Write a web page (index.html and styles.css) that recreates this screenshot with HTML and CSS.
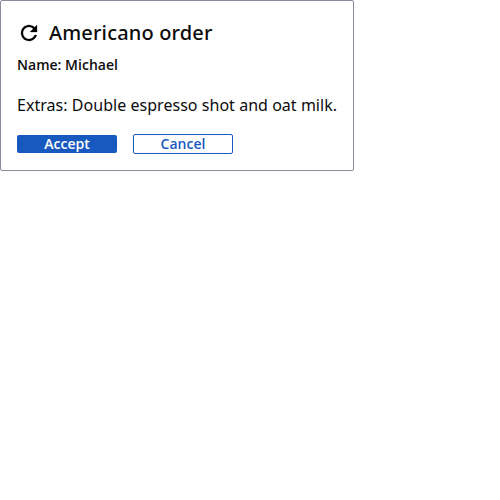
FILE: index.html
```html
<!DOCTYPE html>
<html lang="en">
<head>
<meta charset="utf-8">
<title>Americano order</title>
<link rel="stylesheet" href="styles.css">
</head>
<body>
<article class="card">
  <header class="card-header">
    <svg class="icon" viewBox="0 0 24 24" aria-hidden="true"><path d="M17.65 6.35C16.2 4.9 14.21 4 12 4c-4.42 0-7.99 3.58-7.99 8s3.57 8 7.99 8c3.73 0 6.84-2.55 7.73-6h-2.08c-.82 2.33-3.04 4-5.65 4-3.31 0-6-2.69-6-6s2.69-6 6-6c1.66 0 3.14.69 4.22 1.78L13 11h7V4l-2.35 2.35z"/></svg>
    <h1 class="title">Americano order</h1>
  </header>
  <h2 class="subtitle">Name: Michael</h2>
  <p class="body">Extras: Double espresso shot and oat milk.</p>
  <div class="actions">
    <button class="button primary">Accept</button>
    <button class="button secondary">Cancel</button>
  </div>
</article>
</body>
</html>
```
FILE: styles.css
```css
body {
  margin: 0;
  font-family: "Noto Sans", sans-serif;
}
.card {
  box-sizing: border-box;
  width: 354px;
  height: 171px;
  padding: 16px;
  border: 1px solid #888b99;
  border-radius: 2px;
  background: #fff;
  color: #0c0c0c;
}
.card-header {
  display: flex;
  align-items: center;
  gap: 8px;
  height: 32px;
}
.icon {
  width: 24px;
  height: 24px;
  fill: #000;
  stroke: #000;
  stroke-width: 0.25;
}
.title {
  margin: 0;
  font-size: 20px;
  line-height: 32px;
  font-weight: 500;
  letter-spacing: 0.16px;
}
.subtitle {
  margin: 4px 0 0;
  font-family: "Open Sans", sans-serif;
  font-size: 14px;
  line-height: 24px;
  font-weight: 600;
  letter-spacing: 0.02px;
}
.body {
  margin: 16px 0 0;
  font-size: 16px;
  line-height: 24px;
  letter-spacing: 0.036px;
  white-space: nowrap;
}
.actions {
  display: flex;
  align-items: center;
  gap: 16px;
  margin-top: 17px;
}
.button {
  box-sizing: border-box;
  width: 100px;
  padding: 0;
  border-radius: 2px;
  font: 600 14px/18px "Open Sans", sans-serif;
}
.primary {
  height: 18px;
  border: 0;
  background: #1859bf;
  color: #fff;
}
.secondary {
  height: 20px;
  border: 1px solid #1859bf;
  background: #fff;
  color: #1859bf;
}
```
